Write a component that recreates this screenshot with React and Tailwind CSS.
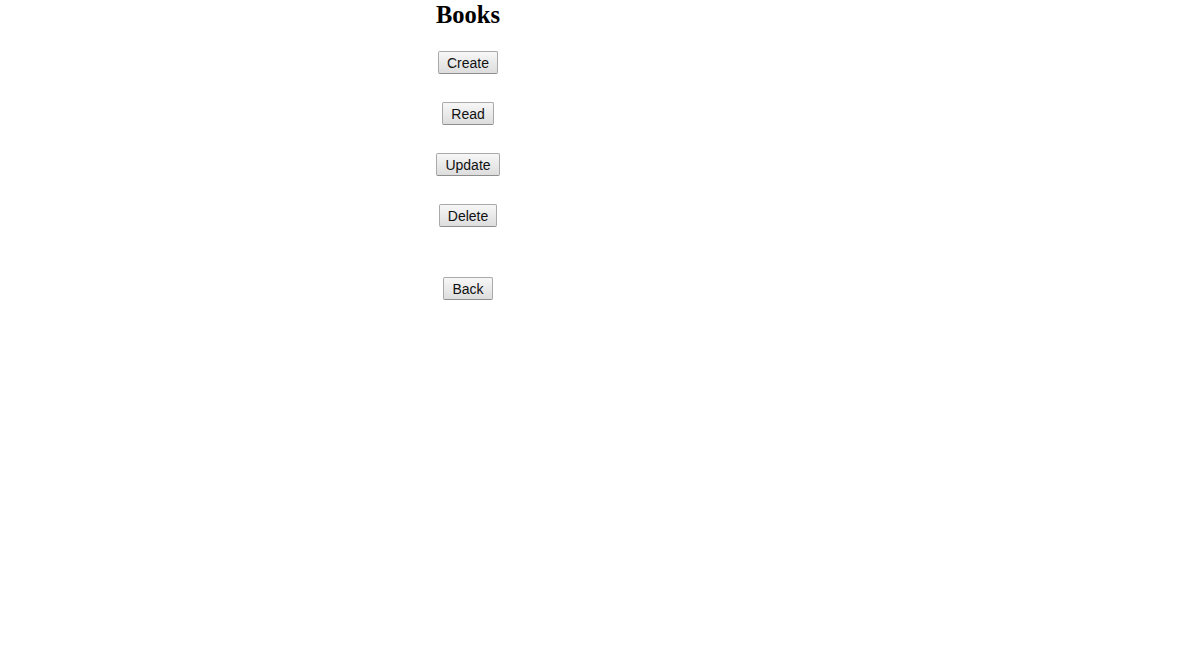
import React from 'react';

const Btn = ({ children, className = '' }) => (
  <button
    className={`h-[23px] px-[8px] text-[14px] leading-[16px] text-[#111] rounded-[2px] border border-[#a9a9a9] border-b-[#8e8e8e] bg-gradient-to-b from-[#f7f7f7] to-[#dddddd] font-['Liberation_Sans',Arial,sans-serif] ${className}`}
  >
    {children}
  </button>
);

const App = () => {
  return (
    <div className="min-h-screen bg-white">
      <div className="w-[936px] flex flex-col items-center">
        <h2 className="mt-[1px] text-[24.5px] leading-[27px] font-bold text-black font-['Liberation_Serif','Times_New_Roman',serif]">
          Books
        </h2>
        <div className="mt-[23px] flex flex-col items-center gap-[28px]">
          <Btn>Create</Btn>
          <Btn>Read</Btn>
          <Btn>Update</Btn>
          <Btn>Delete</Btn>
        </div>
        <Btn className="mt-[50px]">Back</Btn>
      </div>
    </div>
  );
};

export default App;
